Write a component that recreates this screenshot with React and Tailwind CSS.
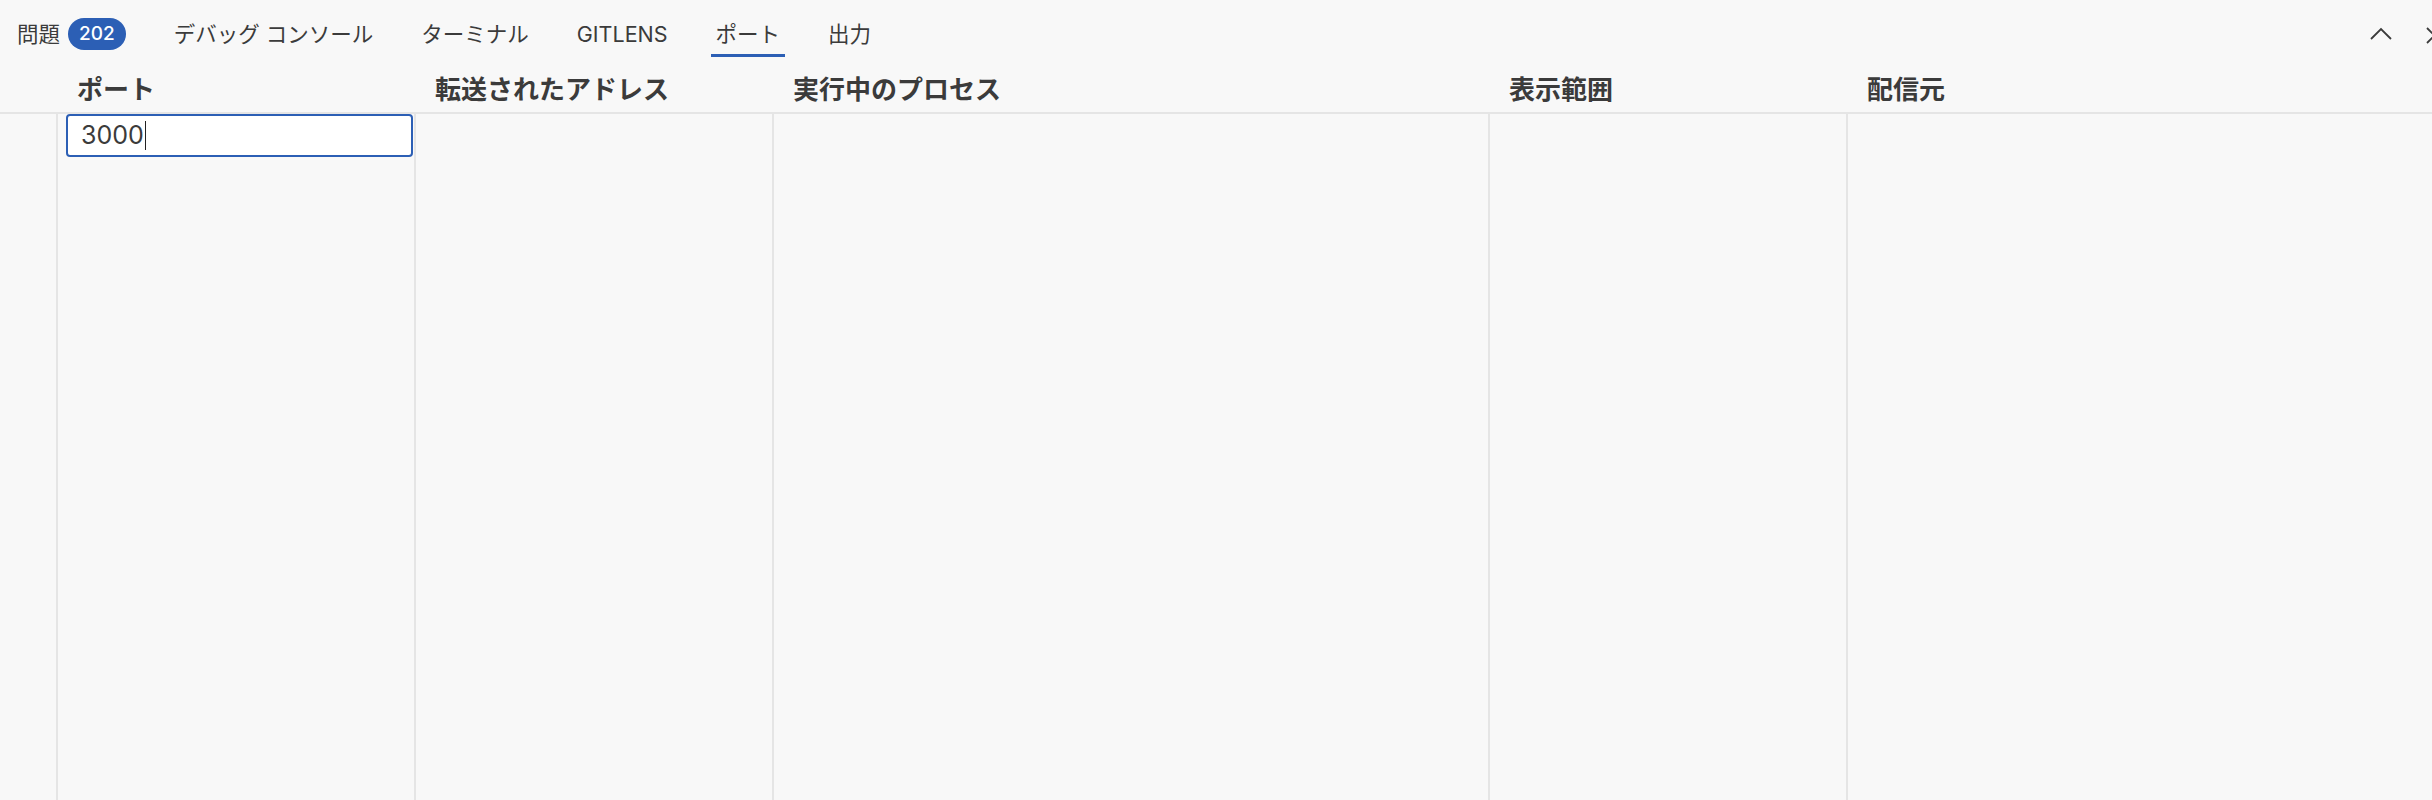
import React from "react";

const tabs = [
  { label: "問題", badge: "202" },
  { label: "デバッグ コンソール" },
  { label: "ターミナル" },
  { label: "GITLENS" },
  { label: "ポート", active: true },
  { label: "出力" },
];

const columns = ["", "ポート", "転送されたアドレス", "実行中のプロセス", "表示範囲", "配信元"];

export default function App() {
  return (
    <div
      className="w-[2432px] h-[800px] overflow-hidden bg-[#f8f8f8] text-[#3b3b3b] flex flex-col"
      style={{ fontFamily: 'Inter, "Noto Sans CJK JP", sans-serif' }}
    >
      {/* panel tabs */}
      <div className="h-[66px] flex items-start pl-[12px] pt-[14px]">
        <div className="flex gap-[38px]">
          {tabs.map((t) => (
            <div
              key={t.label}
              className={
                "h-[43px] px-[5px] flex items-center gap-[8px] text-[21.5px] border-b-[3px] " +
                (t.active ? "border-[#2c5fb5]" : "border-transparent")
              }
            >
              <span>{t.label}</span>
              {t.badge && (
                <span className="h-[32px] px-[11px] rounded-full bg-[#2c5fb5] text-white text-[19px] font-medium flex items-center">
                  {t.badge}
                </span>
              )}
            </div>
          ))}
        </div>
        <div className="ml-auto mr-[-12px] h-[43px] flex items-center gap-[33px]">
          <svg width="22" height="13" viewBox="0 0 22 13" className="mt-[-4px]">
            <polyline points="1,12 11,2 21,12" fill="none" stroke="#3b3b3b" strokeWidth="1.8" />
          </svg>
          <svg width="19" height="19" viewBox="0 0 19 19">
            <path d="M2 2 L17 17 M17 2 L2 17" fill="none" stroke="#3b3b3b" strokeWidth="1.8" />
          </svg>
        </div>
      </div>

      {/* table header */}
      <div className="grid grid-cols-[58px_358px_358px_716px_358px_1fr] h-[48px] border-b-2 border-[#e5e5e5]">
        {columns.map((c, i) => (
          <div key={i} className="pl-[19px] flex items-center text-[26px] font-bold whitespace-nowrap">
            {c}
          </div>
        ))}
      </div>

      {/* table body */}
      <div className="flex-1 grid grid-cols-[58px_358px_358px_716px_358px_1fr]">
        {columns.map((c, i) => (
          <div key={i} className={i < columns.length - 1 ? "border-r-2 border-[#e5e5e5]" : ""}>
            {i === 1 && (
              <div className="ml-[8px] w-[347px] h-[43px] bg-white border-2 border-[#2c5fb5] rounded-[4px] pl-[13px] flex items-center text-[25px]">
                <span>3000</span>
                <span className="w-[1.5px] h-[29px] bg-[#222] ml-[1px]" />
              </div>
            )}
          </div>
        ))}
      </div>
    </div>
  );
}
